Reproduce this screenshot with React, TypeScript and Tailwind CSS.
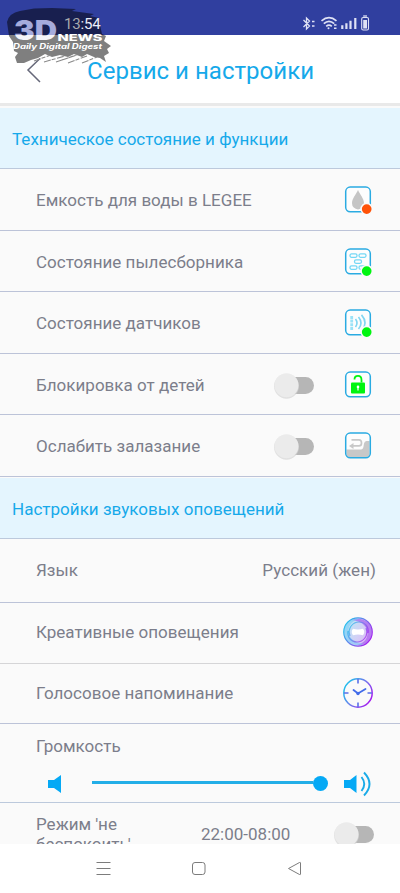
import type { ReactNode } from 'react';

function Row({ label, h, line = 'border-[#bcc3d8]', children }: { label: string; h: string; line?: string; children?: ReactNode }) {
  return (
    <div className={`flex shrink-0 items-center border-b pl-[36px] ${h} ${line}`}>
      <span className="flex-1 whitespace-nowrap tracking-[0.02px]">{label}</span>
      {children}
    </div>
  );
}

function Section({ title, h }: { title: string; h: string }) {
  return (
    <div className={`flex shrink-0 items-center border-b border-[#bcc9dc] bg-[#e4f5fe] pl-[12px] pt-[2px] text-[#16a9ea] ${h}`}>
      <span className="whitespace-nowrap tracking-[0.02px]">{title}</span>
    </div>
  );
}

function Toggle() {
  return (
    <svg width="44" height="30" viewBox="0 0 44 30" className="shrink-0">
      <rect x="10" y="7" width="31" height="17" rx="8.5" fill="#b6b6b6" />
      <circle cx="13.5" cy="16.3" r="12.4" fill="#d4d4d4" opacity="0.7" />
      <circle cx="13.5" cy="15.3" r="12" fill="#ebebeb" />
    </svg>
  );
}

function Tile({ dot, children }: { dot?: string; children: ReactNode }) {
  return (
    <svg width="30" height="30" viewBox="0 0.6 30 30" fill="none" className="mr-[27px] shrink-0">
      <rect x="2.7" y="2.7" width="24.6" height="24.6" rx="4.5" fill="#fdfdfd" />
      {children}
      <rect x="2.7" y="2.7" width="24.6" height="24.6" rx="4.5" stroke="#2aabe2" strokeWidth="1.5" />
      {dot && <circle cx="23.7" cy="24.7" r="5.6" fill={dot} stroke="#fafafa" strokeWidth="1.5" />}
    </svg>
  );
}

function Watermark() {
  return (
    <svg width="120" height="72" viewBox="0 0 120 72" className="absolute left-0 top-0">
      <defs>
        <linearGradient id="mark" gradientUnits="userSpaceOnUse" x1="0" y1="34.500" x2="0" y2="35.500">
          <stop offset="0" stopColor="#a5abdc" />
          <stop offset="1" stopColor="#f4f4f8" />
        </linearGradient>
      </defs>
      <path
        d="M7 22Q9 13 20 11L34 8.500 52 8 76 9 72 11 94 14 90 16 99 18 100 25 102 34 106 36 104 41 111 46 107 49 109 53 104 56 106 62 100 58 94 57 87 54 82 57 74 54 68 57 60 55 52 57 45 54 38 58 31 60 24 63 17 63 15 57 18 53 14 51 13 42 9 36 8 29Z"
        fill="#000"
        opacity="0.5"
      />
      <path d="M34 61l17-6M44 62l21-6M56 62l21-7M68 63l19-7M82 63l15-6M62 60l14-5" stroke="#8a8a8a" strokeWidth="1.1" strokeDasharray="7 1 4 1.500" />
      <text x="14" y="40" textLength="43" lengthAdjust="spacingAndGlyphs" fill="url(#mark)" fontFamily="Inter, sans-serif" fontWeight="900" fontSize="27">3D</text>
      <text x="57.500" y="40.500" textLength="45" lengthAdjust="spacingAndGlyphs" fill="#fff" fontFamily="Inter, sans-serif" fontWeight="800" fontSize="8.300">NEWS</text>
      <text x="13" y="49" textLength="89" lengthAdjust="spacingAndGlyphs" fill="#fff" fontFamily="Inter, sans-serif" fontWeight="700" fontStyle="italic" fontSize="7.200">Daily Digital Digest</text>
    </svg>
  );
}

function StatusIcons() {
  return (
    <svg width="72" height="20" viewBox="300 14 72 20" fill="none" stroke="#dfe2f5">
      <path d="M303.500 20l6 6-3 3V18l3 3-6 6M312 21.500h2.500M312 26h2.500" strokeWidth="1.3" />
      <path d="M321.500 20.800q7.500-6.500 15 0M323.800 23.700q5.200-4.600 10.400 0M326.200 26.300q2.800-2.400 5.600 0" strokeWidth="1.7" />
      <circle cx="328.500" cy="28.200" r="1" fill="#dfe2f5" stroke="none" />
      <path d="M334 25h2.500M334 28.300h2.500" strokeWidth="1.5" />
      <path d="M342.300 29v-3.800M346.400 29v-5.800M350.500 29v-8.300M355.300 29v-11" strokeWidth="2.2" />
      <rect x="361.700" y="17.500" width="6.800" height="12.500" rx="1.500" strokeWidth="1.100" />
      <path d="M363.200 16h3.800" strokeWidth="1.300" />
      <path d="M363.200 20h3.800v8.500h-3.800z" fill="#dfe2f5" stroke="none" />
    </svg>
  );
}

export default function App() {
  return (
    <div className="relative flex h-[893px] w-[400px] flex-col overflow-hidden bg-[#fafafa] font-['Roboto',sans-serif] text-[17px] leading-[20px] text-[#7c7e8b]">
      <div className="flex h-[35px] shrink-0 items-center bg-[#303f9f] pl-[64px] pt-[12px]">
        <span className="relative z-10 flex-1 text-[15px] tracking-[-0.2px] text-[#eceefa]">
          <span className="text-[#a9a9ac]">13</span>:54
        </span>
        <div className="mr-[28px]"><StatusIcons /></div>
      </div>
      <div className="flex h-[71px] shrink-0 items-center border-b-[3px] border-[#e9e9e9] bg-white pt-[2px]">
        <svg width="20" height="26" viewBox="0 0 20 26" fill="none" className="ml-[25px]">
          <path d="M15 1.500L3 13l12 12" stroke="#666879" strokeWidth="1.5" />
        </svg>
        <h1 className="ml-[42px] whitespace-nowrap pt-[2px] text-[24px] leading-[30px] tracking-[0.03px] text-[#16a9ea]">Сервис и настройки</h1>
      </div>
      <div className="h-[2px] shrink-0 bg-[#fafafa]" />

      <main className="flex h-[736px] shrink-0 flex-col overflow-hidden">
        <Section title="Техническое состояние и функции" h="h-[61px]" />
        <Row label="Емкость для воды в LEGEE" h="h-[62px]">
          <Tile dot="#ff5208">
            <path d="M15 5.500C13 10 9 14 9 18.800a6 6.200 0 0 0 12 0C21 14 17 10 15 5.500z" fill="#c5c5c5" />
          </Tile>
        </Row>
        <Row label="Состояние пылесборника" h="h-[61px] pt-px">
          <Tile dot="#00f510">
            <g stroke="#74d8f5" strokeWidth="1.300">
              <rect x="7" y="7.500" width="7" height="3.400" rx="1.500" />
              <rect x="16" y="7.500" width="7" height="3.400" rx="1.500" />
              <rect x="11.500" y="13.500" width="7" height="3.400" rx="1.500" />
              <rect x="7" y="19.500" width="7" height="3.400" rx="1.500" />
              <rect x="16" y="19.500" width="7" height="3.400" rx="1.500" />
            </g>
          </Tile>
        </Row>
        <Row label="Состояние датчиков" h="h-[62px]">
          <Tile dot="#00f510">
            <path d="M8.700 8.500v14" stroke="#9be2f7" strokeWidth="2.800" strokeDasharray="3 .7" />
            <path d="M12.500 11.500q3 4 0 8M15.500 9.500q5 6 0 12M18.500 7.500q7 8 0 16" stroke="#80d6f2" strokeWidth="1.600" />
          </Tile>
        </Row>
        <Row label="Блокировка от детей" h="h-[61px] pt-px">
          <div className="mr-[26px] flex"><Toggle /></div>
          <Tile>
            <rect x="8" y="13" width="14" height="11" rx="1" fill="#00f510" />
            <path d="M11.500 10q0-3.500 3.500-3.500t3.500 4V13" stroke="#00f510" strokeWidth="1.800" />
            <circle cx="15" cy="17.500" r="1.300" fill="#fff" />
            <path d="M15 18v3" stroke="#fff" strokeWidth="1.200" />
          </Tile>
        </Row>
        <Row label="Ослабить залазание" h="h-[62px]">
          <div className="mr-[26px] flex"><Toggle /></div>
          <Tile>
            <path d="M3.500 19H18q2 0 2.500-3l.5-3q.5-2.500 2.500-2.500h3V23q0 3.500-3.500 3.500H7q-3.500 0-3.500-3.500z" fill="#c8c8c8" />
            <path d="M8.500 9.500H16q2.500 0 2.500 3t-2.500 3H8" stroke="#c8c8c8" strokeWidth="1.700" />
            <path d="M10.500 12.500v6l-4.500-3z" fill="#c8c8c8" />
          </Tile>
        </Row>
        <div className="h-px shrink-0" />
        <Section title="Настройки звуковых оповещений" h="h-[61px]" />
        <Row label="Язык" h="h-[64px] pb-[2px]">
          <span className="mr-[24px] tracking-[0.05px]">Русский (жен)</span>
        </Row>
        <Row label="Креативные оповещения" h="h-[61px] pb-[2px]" line="border-[#d5d5d7]">
          <svg width="32" height="32" viewBox="0 0 32 32" fill="none" className="mr-[26px]">
            <defs>
              <linearGradient id="ring" x1="0" y1="0.2" x2="1" y2="0.8">
                <stop offset="0" stopColor="#18c6ec" />
                <stop offset="0.5" stopColor="#6f78ec" />
                <stop offset="1" stopColor="#aa10f0" />
              </linearGradient>
            </defs>
            <circle cx="16" cy="16" r="14.200" fill="url(#ring)" fillOpacity="0.3" stroke="url(#ring)" strokeWidth="1.300" />
            <path d="M10 4C20 0 30 7 30 16S22 30 15 29c8-2 12-8 10-15S16 5 10 4z" fill="#a557ee" fillOpacity="0.65" />
            <path d="M22 28C12 32 2 25 2 16S10 2 17 3C9 5 5 11 7 18s9 9 15 10z" fill="#72caf5" fillOpacity="0.55" />
            <path d="M8 20C5 12 11 6 17 6s10 5 9 11M24 12c3 8-3 14-9 14S5 21 6 15" stroke="url(#ring)" strokeWidth="1.200" opacity="0.75" />
            <path d="M11 12.800q5 1.200 10 0 2.500 3.200 0 6.400-5-1.200-10 0-2.500-3.200 0-6.400z" fill="#fff" />
          </svg>
        </Row>
        <Row label="Голосовое напоминание" h="h-[60px] pb-[2px]">
          <svg width="32" height="32" viewBox="0 0 32 32" fill="none" className="mr-[26px]">
            <circle cx="16" cy="16" r="14.200" stroke="url(#ring)" strokeWidth="1.500" />
            <path d="M16 2v4.500M16 25.500V30M2 16h4.500M25.500 16H30" stroke="#5b70e9" strokeWidth="1.600" />
            <path d="M11.500 13L16 16.500l7.500-4.500" stroke="#426be9" strokeWidth="1.800" strokeLinecap="round" />
            <circle cx="16" cy="16.500" r="1.700" fill="#426be9" />
          </svg>
        </Row>
        <div className="flex h-[79px] shrink-0 flex-col border-b border-[#bcc9dc] pl-[36px] pt-[12px]">
          <span>Громкость</span>
          <div className="mt-[14px] flex h-[28px] items-center">
            <svg width="20" height="28" viewBox="0 0 20 28" className="ml-[10px]">
              <path d="M2 10h6l7-5v18l-7-5H2z" fill="#05a9f5" />
            </svg>
            <div className="ml-[26px] flex h-[15px] w-[236px] -translate-y-px items-center">
              <div className="h-[3px] flex-1 -translate-y-px bg-[#23aee7]" />
              <div className="size-[15px] rounded-full bg-[#05a9f5]" />
            </div>
            <svg width="32" height="28" viewBox="0 0 32 28" fill="none" className="ml-[14px]">
              <path d="M2 10h6l6.500-5v18L8 18H2z" fill="#05a9f5" />
              <path d="M19.500 7q5.500 7 0 14M22 2.500q11 11.500 0 23" stroke="#1aabe8" strokeWidth="1.900" />
            </svg>
          </div>
        </div>
        <div className="flex h-[62px] shrink-0 items-center pl-[36px]">
          <span className="w-[165px]">Режим 'не<br />беспокоить'</span>
          <span className="w-[132px]">22:00-08:00</span>
          <Toggle />
        </div>
      </main>

      <nav className="flex h-[49px] shrink-0 items-center bg-white pb-[2px] text-[#7c7c7c]">
        <svg width="400" height="20" viewBox="0 0 400 20" fill="none" stroke="currentColor" strokeWidth="1">
          <path d="M96.500 4.500h14M96.500 10.500h14M96.500 16.500h14" />
          <rect x="192.500" y="4.500" width="12.500" height="12" rx="2.500" />
          <path d="M288.500 10.500L299.500 4.500q1-.5 1 .5v11q0 1-1 .5z" />
        </svg>
      </nav>
      <Watermark />
    </div>
  );
}
